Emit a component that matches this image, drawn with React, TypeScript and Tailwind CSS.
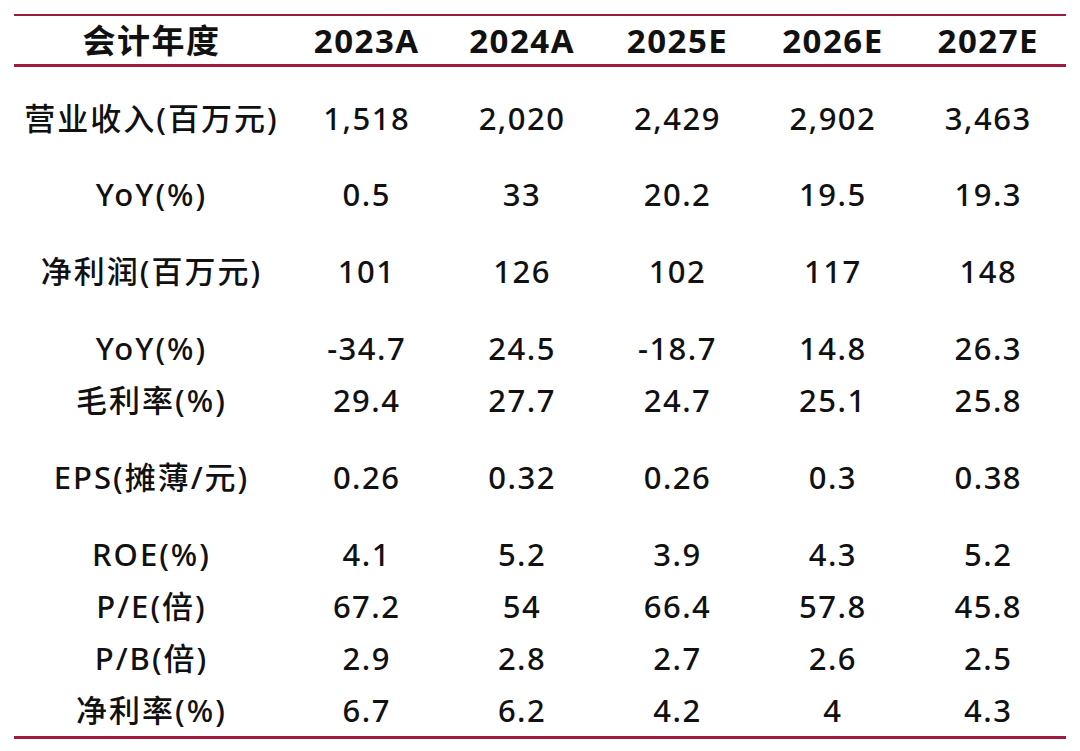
import React from "react";

const headers = ["2023A", "2024A", "2025E", "2026E", "2027E"];

const rows: { label: string; values: string[]; h: string }[] = [
  { label: "营业收入(百万元)", values: ["1,518", "2,020", "2,429", "2,902", "3,463"], h: "h-[100px]" },
  { label: "YoY(%)", values: ["0.5", "33", "20.2", "19.5", "19.3"], h: "h-[52px]" },
  { label: "净利润(百万元)", values: ["101", "126", "102", "117", "148"], h: "h-[102px]" },
  { label: "YoY(%)", values: ["-34.7", "24.5", "-18.7", "14.8", "26.3"], h: "h-[52px]" },
  { label: "毛利率(%)", values: ["29.4", "27.7", "24.7", "25.1", "25.8"], h: "h-[52px]" },
  { label: "EPS(摊薄/元)", values: ["0.26", "0.32", "0.26", "0.3", "0.38"], h: "h-[102px]" },
  { label: "ROE(%)", values: ["4.1", "5.2", "3.9", "4.3", "5.2"], h: "h-[52px]" },
  { label: "P/E(倍)", values: ["67.2", "54", "66.4", "57.8", "45.8"], h: "h-[52px]" },
  { label: "P/B(倍)", values: ["2.9", "2.8", "2.7", "2.6", "2.5"], h: "h-[52px]" },
  { label: "净利率(%)", values: ["6.7", "6.2", "4.2", "4", "4.3"], h: "h-[52px]" },
];

export default function App() {
  return (
    <div
      className="w-[1080px] h-[751px] bg-white text-[#111111] overflow-hidden"
      style={{ fontFamily: '"Noto Sans", "Noto Sans CJK SC", sans-serif' }}
    >
      <div className="mx-[14px] pt-[14px]">
        <div className="border-t-2 border-b-[3px] border-[#9e1b3f] h-[53px] grid grid-cols-[275px_repeat(5,1fr)] items-center font-bold text-[33px] tracking-[1.5px]">
          <div className="text-center">会计年度</div>
          {headers.map((h) => (
            <div key={h} className="text-center">
              {h}
            </div>
          ))}
        </div>
        <div className="pt-[1px] border-b-[3px] border-[#9e1b3f] font-medium text-[31px]">
          {rows.map((r, i) => (
            <div key={i} className={`grid grid-cols-[275px_repeat(5,1fr)] items-center ${r.h}`}>
              <div className="text-center tracking-[2px]">{r.label}</div>
              {r.values.map((v, j) => (
                <div key={j} className="text-center tracking-[1.5px]">
                  {v}
                </div>
              ))}
            </div>
          ))}
        </div>
      </div>
    </div>
  );
}
